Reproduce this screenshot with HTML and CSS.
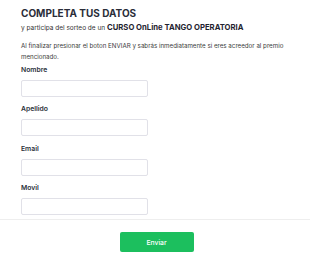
FILE: index.html
```html
<!DOCTYPE html>
<html lang="es">
  <head>
    <meta charset="UTF-8" />
    <title>Completa tus datos</title>
    <link rel="stylesheet" href="styles.css">
  </head>
  <body>
    <div class="form-wrap">
      <div class="form-body">
        <h1>COMPLETA TUS DATOS</h1>
        <p class="sub">y participa del sorteo de un <b>CURSO OnLine TANGO OPERATORIA</b></p>
        <p class="info">
          Al finalizar presionar el boton ENVIAR y sabrás inmediatamente si eres acreedor al premio mencionado.
        </p>

        <div class="fields">
          <div class="field">
            <label>Nombre</label>
            <input type="text" />
          </div>
          <div class="field">
            <label>Apellido</label>
            <input type="text" />
          </div>
          <div class="field">
            <label>Email</label>
            <input type="email" />
          </div>
          <div class="field">
            <label>Movil</label>
            <input type="tel" />
          </div>
        </div>
      </div>

      <div class="form-footer">
        <button class="send-btn">Enviar</button>
      </div>
    </div>
  </body>
</html>
```

FILE: styles.css
```css
* {
  margin: 0;
  padding: 0;
  box-sizing: border-box;
}

body {
  font-family: Inter, "Noto Sans", sans-serif;
  background-color: #fff;
  color: #1f2937;
}

.form-body {
  padding: 7px 21px 4px 21px;
}

h1 {
  font-size: 10px;
  font-weight: 700;
  line-height: 12px;
  color: #2a2d38;
}

.sub {
  font-size: 6.5px;
  color: #333;
  margin-top: 4px;
  line-height: 10px;
}

.sub b {
  font-size: 7.7px;
  font-weight: 700;
  color: #1f2430;
}

.info {
  font-size: 6.2px;
  line-height: 11px;
  color: #3b3b3b;
  margin-top: 7px;
}

.fields {
  display: flex;
  flex-direction: column;
  gap: 6.5px;
  margin-top: 1.5px;
}

.field label {
  display: block;
  font-size: 6.8px;
  font-weight: 600;
  color: #2a2f3a;
  line-height: 12px;
  margin-bottom: 4px;
}

.field input {
  display: block;
  width: 127px;
  height: 17px;
  border: 1px solid #e1e1e8;
  border-radius: 2px;
  background: #fff;
}

.form-footer {
  border-top: 1px solid #eeeeee;
  padding-top: 12px;
  display: flex;
  justify-content: center;
}

.send-btn {
  width: 74px;
  height: 20px;
  background-color: #1cbf5e;
  color: #fff;
  border: none;
  border-radius: 2px;
  font-family: Inter, sans-serif;
  font-size: 6.8px;
  font-weight: 500;
  margin-left: 3px;
}
```
